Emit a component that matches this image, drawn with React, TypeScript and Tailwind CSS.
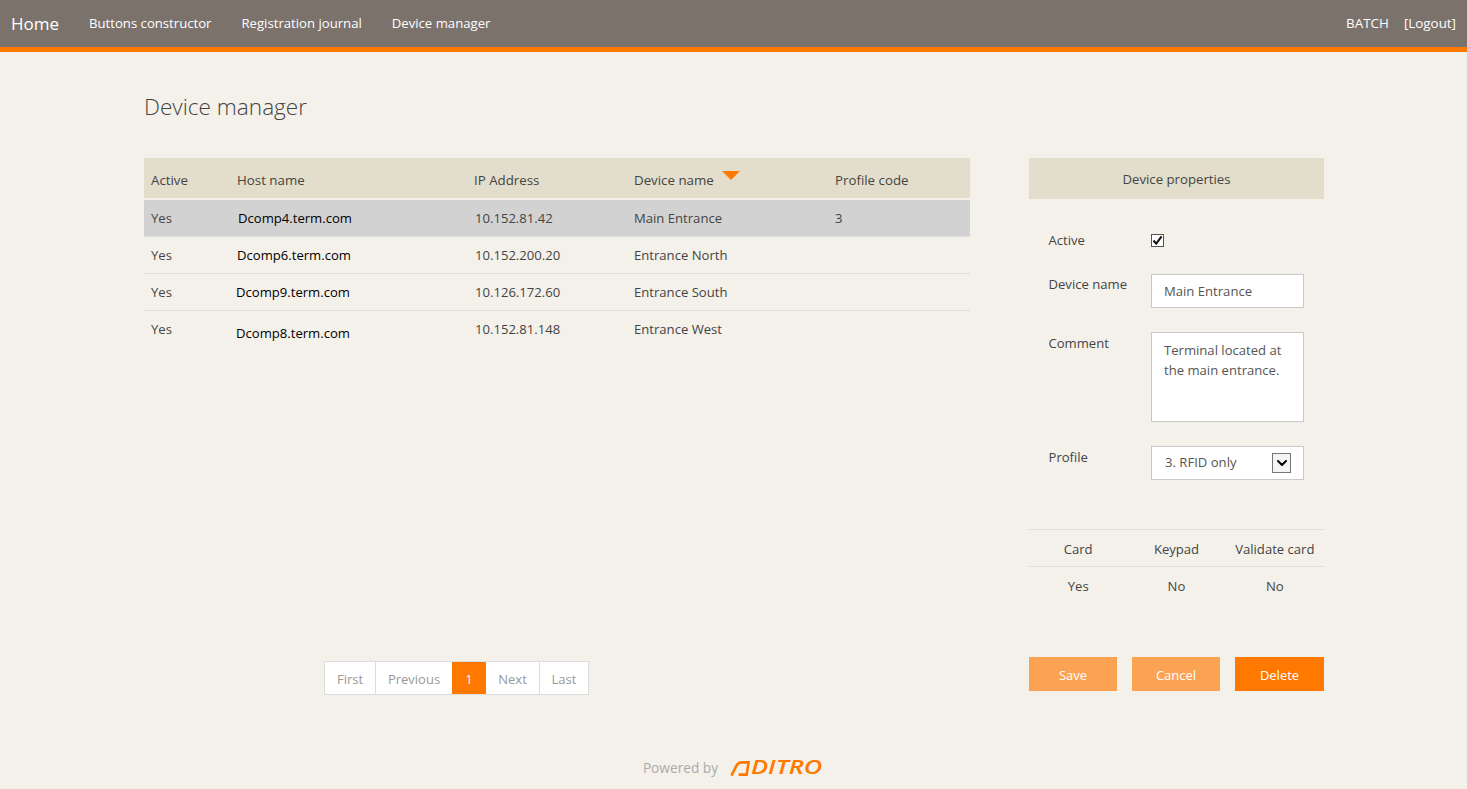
import { ChevronDown } from "lucide-react";

const devices = [
  { active: "Yes", host: "Dcomp4.term.com", hostClass: "pl-[2px]", ip: "10.152.81.42", name: "Main Entrance", code: "3" },
  { active: "Yes", host: "Dcomp6.term.com", hostClass: "pl-px", ip: "10.152.200.20", name: "Entrance North", code: "" },
  { active: "Yes", host: "Dcomp9.term.com", hostClass: "", ip: "10.126.172.60", name: "Entrance South", code: "" },
  { active: "Yes", host: "Dcomp8.term.com", hostClass: "pt-2", ip: "10.152.81.148", name: "Entrance West", code: "" },
];

const navLinks = ["Buttons constructor", "Registration journal", "Device manager"];

function AditroLogo() {
  return (
    <div className="flex h-[18px] items-center text-[#ff7900]">
      <svg width="21" height="15" viewBox="0 0 21 15" fill="none" aria-hidden="true">
        <path
          d="M1.4 14.6 L6.4 4.8 C7.6 2.4 9 1.4 11.5 1.4 L18.6 1.4 L16.6 13.6 L8.6 13.6"
          stroke="#ff7900"
          strokeWidth="2.6"
        />
      </svg>
      <div className="w-[71px]">
        <span className="inline-block origin-left scale-x-[1.34] text-[19px] leading-none font-semibold italic font-['Open_Sans',sans-serif]">
          DITRO
        </span>
      </div>
    </div>
  );
}

function Pagination() {
  const cell = "flex h-full items-center justify-center pt-[3px]";
  return (
    <div className="ml-[180px] flex h-[34px] w-[265px] border border-[#dcdcdc] bg-white text-[13px] text-[#999]">
      <div className={`${cell} w-[51px] border-r border-[#dcdcdc]`}>First</div>
      <div className={`${cell} w-[76px]`}>Previous</div>
      <div className={`${cell} w-[34px] bg-[#ff7900] text-white`}>1</div>
      <div className={`${cell} w-[54px] border-r border-[#dcdcdc]`}>Next</div>
      <div className={`${cell} flex-1`}>Last</div>
    </div>
  );
}

function DeviceTable() {
  return (
    <div className="w-[826px]">
      <div className="grid h-10 grid-cols-[85px_238px_159px_202px_142px] items-center bg-[#e3decb] pt-[5px] text-[13.3px]">
        <div className="pl-[7px]">Active</div>
        <div className="pl-2">Host name</div>
        <div className="pl-[7px]">IP Address</div>
        <div className="relative pl-2">
          Device name
          <span className="absolute top-0 left-[96px] h-0 w-0 border-x-[9px] border-t-[9px] border-x-transparent border-t-[#ff7900]" />
        </div>
        <div className="pl-[7px]">Profile code</div>
      </div>
      <div className="mt-[2px]">
        {devices.map((d, i) => (
          <div
            key={d.host}
            className={`grid h-[37px] grid-cols-[85px_238px_159px_202px_142px] items-center border-b pt-px text-[13.1px] ${
              i === 0 ? "border-[#dcdcdc] bg-[#d2d2d2]" : i === 3 ? "border-transparent" : "border-[#dcdcdc]"
            }`}
          >
            <div className="pl-[7px]">{d.active}</div>
            <div className="pl-[7px] text-black">
              <div className={d.hostClass}>{d.host}</div>
            </div>
            <div className="pl-2">{d.ip}</div>
            <div className="pl-2">{d.name}</div>
            <div className="pl-[7px]">{d.code}</div>
          </div>
        ))}
      </div>
    </div>
  );
}

function DeviceProperties() {
  const field = "w-[153px] border border-[#c9c9c9] bg-white text-[13.1px] text-[#555] outline-none";
  return (
    <div className="w-[295px]">
      <div className="flex h-[41px] items-center justify-center bg-[#e3decb] pt-[2px] text-[13.2px]">Device properties</div>

      <div className="pr-5 pl-[19.5px] text-[13.1px]">
        <div className="mt-[31px] flex h-5 items-center">
          <div className="w-[102.5px] pt-[2px]">Active</div>
          <div className="flex h-[13px] w-[13px] items-center justify-center border border-[#555] bg-white">
            <svg width="11" height="11" viewBox="0 0 11 11" fill="none" aria-hidden="true">
              <path d="M1.5 5.5 L4.2 8.6 L9.6 1.4" stroke="#111" strokeWidth="2" />
            </svg>
          </div>
        </div>

        <div className="mt-[24px] flex">
          <div className="w-[102.5px] pt-px">Device name</div>
          <input readOnly value="Main Entrance" className={`${field} h-[34px] px-3`} />
        </div>

        <div className="mt-6 flex">
          <div className="w-[102.5px] pt-[2px]">Comment</div>
          <textarea
            readOnly
            value="Terminal located at the main entrance."
            className={`${field} h-[90px] resize-none px-3 pt-[7px] leading-5`}
          />
        </div>

        <div className="mt-6 flex">
          <div className="w-[102.5px] pt-[2px]">Profile</div>
          <div className={`${field} relative flex h-[34px] items-center pl-[13px]`}>
            3. RFID only
            <span className="absolute top-[6px] right-[12px] flex h-5 w-[19px] items-center justify-center border border-[#777] bg-[#f4f4f4]">
              <ChevronDown size={16} strokeWidth={3} className="text-black" />
            </span>
          </div>
        </div>
      </div>

      <div className="mt-[49px] text-center text-[13.1px]">
        <div className="grid h-[38px] grid-cols-3 items-center border-y border-[#dcdcdc] pt-[3px]">
          <div>Card</div>
          <div>Keypad</div>
          <div>Validate card</div>
        </div>
        <div className="grid h-[38px] grid-cols-3 items-center pt-[2px]">
          <div>Yes</div>
          <div>No</div>
          <div>No</div>
        </div>
      </div>

      <div className="mt-[52px] flex justify-between text-[13px] text-white">
        <button className="h-[34px] w-[88px] bg-[#fca353] pt-[3px]">Save</button>
        <button className="h-[34px] w-[88px] bg-[#fca353] pt-[3px]">Cancel</button>
        <button className="h-[34px] w-[89px] bg-[#ff7900] pt-[3px]">Delete</button>
      </div>
    </div>
  );
}

export default function App() {
  return (
    <div className="min-h-[789px] bg-[#f4f1ea] font-['Open_Sans',sans-serif] text-[#444]">
      <header className="flex h-[52px] items-center border-b-[5px] border-[#ff7900] bg-[#7b726c] px-[11px] text-[13.15px] text-white">
        <a className="mr-[30px] text-[17px]">Home</a>
        <nav className="flex gap-[30px]">
          {navLinks.map((link) => (
            <a key={link}>{link}</a>
          ))}
        </nav>
        <div className="ml-auto flex gap-[15px] text-[13.4px]">
          <span>BATCH</span>
          <span>[Logout]</span>
        </div>
      </header>

      <main className="pr-[143px] pl-[144px]">
        <h1 className="pt-[39px] text-[22.6px] leading-8 font-light">Device manager</h1>
        <div className="mt-[35px] flex justify-between">
          <div className="flex w-[826px] flex-col">
            <DeviceTable />
            <div className="mt-[313px]">
              <Pagination />
            </div>
          </div>
          <DeviceProperties />
        </div>
      </main>

      <footer className="mt-[63px] flex items-center justify-center gap-3 pr-0.5 text-[13.7px] text-[#aaa]">
        <span>Powered by</span>
        <AditroLogo />
      </footer>
    </div>
  );
}
